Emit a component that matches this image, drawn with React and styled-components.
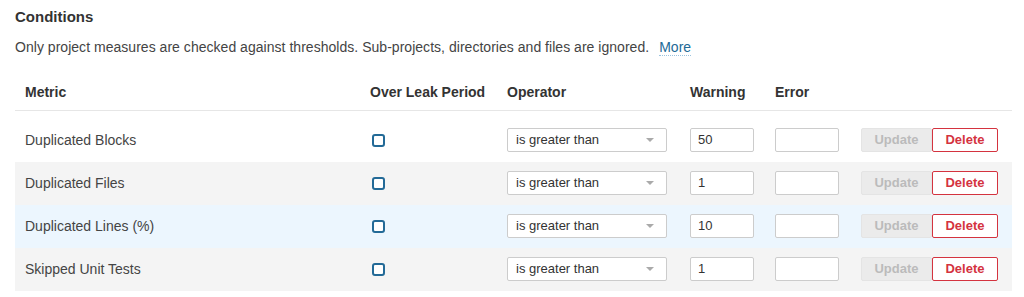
import React from "react"
import styled, { createGlobalStyle } from "styled-components"

const GlobalStyle = createGlobalStyle`
  body {
    margin: 0;
    background: #fff;
    font-family: "Liberation Sans", Arial, sans-serif;
    font-size: 14px;
    color: #444;
  }
`

const conditions = [
  { metric: "Duplicated Blocks", warning: "50", tone: "plain" },
  { metric: "Duplicated Files", warning: "1", tone: "striped" },
  { metric: "Duplicated Lines (%)", warning: "10", tone: "hover" },
  { metric: "Skipped Unit Tests", warning: "1", tone: "striped" },
]

const App = () => {
  return (
    <Page>
      <GlobalStyle />
      <Heading>Conditions</Heading>
      <Description>
        Only project measures are checked against thresholds. Sub-projects, directories and files are ignored.
        <MoreLink href="#">More</MoreLink>
      </Description>
      <Table>
        <colgroup>
          <col style={{ width: 345 }} />
          <col style={{ width: 137 }} />
          <col style={{ width: 183 }} />
          <col style={{ width: 85 }} />
          <col style={{ width: 86 }} />
          <col style={{ width: 161 }} />
        </colgroup>
        <thead>
          <tr>
            <HeadCell>Metric</HeadCell>
            <HeadCell>Over Leak Period</HeadCell>
            <HeadCell>Operator</HeadCell>
            <HeadCell>Warning</HeadCell>
            <HeadCell>Error</HeadCell>
            <HeadCell />
          </tr>
        </thead>
        <tbody>
          <SpacerRow>
            <td colSpan={6} />
          </SpacerRow>
          {conditions.map((item) => (
            <Row key={item.metric} $tone={item.tone}>
              <Cell>{item.metric}</Cell>
              <Cell>
                <Checkbox />
              </Cell>
              <Cell>
                <Select>
                  <span>is greater than</span>
                  <Arrow />
                </Select>
              </Cell>
              <Cell>
                <Input>{item.warning}</Input>
              </Cell>
              <Cell>
                <Input />
              </Cell>
              <Cell>
                <Actions>
                  <UpdateButton>Update</UpdateButton>
                  <DeleteButton>Delete</DeleteButton>
                </Actions>
              </Cell>
            </Row>
          ))}
        </tbody>
      </Table>
    </Page>
  )
}

export default App

const Page = styled.div`
  padding: 8px 0 0 15px;
  width: 997px;
`

const Heading = styled.h2`
  margin: 0;
  font-size: 15px;
  line-height: 17px;
  font-weight: bold;
  color: #333;
`

const Description = styled.p`
  margin: 14px 0 0;
  line-height: 17px;
  color: #444;
  letter-spacing: 0.03px;
`

const MoreLink = styled.a`
  margin-left: 10px;
  color: #236a97;
  text-decoration: none;
  border-bottom: 1px dotted #9cc3de;
`

const Table = styled.table`
  margin-top: 18px;
  width: 997px;
  table-layout: fixed;
  border-collapse: collapse;
`

const HeadCell = styled.th`
  padding: 10px 10px;
  line-height: 16px;
  text-align: left;
  font-weight: bold;
  color: #333;
  border-bottom: 1px solid #e6e6e6;
  white-space: nowrap;
`

const SpacerRow = styled.tr`
  height: 8px;
`

const toneColors = {
  plain: "#fff",
  striped: "#f4f4f4",
  hover: "#ecf6fe",
}

const Row = styled.tr`
  height: 43px;
  background: ${(p) => toneColors[p.$tone]};
`

const Cell = styled.td`
  padding: 0 10px;
  vertical-align: middle;
  line-height: 16px;
  white-space: nowrap;
`

const Checkbox = styled.span`
  display: block;
  margin-left: 2px;
  width: 9px;
  height: 9px;
  border: 2px solid #236a97;
  border-radius: 3px;
  background: #fff;
`

const Select = styled.div`
  box-sizing: border-box;
  display: flex;
  align-items: center;
  justify-content: space-between;
  width: 160px;
  height: 24px;
  padding: 0 12px 0 8px;
  border: 1px solid #ccc;
  border-radius: 2px;
  background: #fff;
  color: #333;
  font-size: 13px;
`

const Arrow = styled.span`
  width: 0;
  height: 0;
  border-left: 4px solid transparent;
  border-right: 4px solid transparent;
  border-top: 4px solid #aaa;
`

const Input = styled.div`
  box-sizing: border-box;
  width: 64px;
  height: 24px;
  padding: 3px 7px;
  border: 1px solid #ccc;
  border-radius: 2px;
  background: #fff;
  color: #333;
  font-size: 13px;
`

const Actions = styled.div`
  display: flex;
`

const Button = styled.span`
  box-sizing: border-box;
  display: flex;
  align-items: center;
  justify-content: center;
  height: 24px;
  font-size: 13px;
  font-weight: bold;
  border-radius: 2px;
`

const UpdateButton = styled(Button)`
  width: 71px;
  background: #ebebeb;
  border: 1px solid #e4e4e4;
  color: #bbb;
`

const DeleteButton = styled(Button)`
  width: 66px;
  background: #fff;
  border: 1px solid #d4333f;
  color: #d4333f;
`
